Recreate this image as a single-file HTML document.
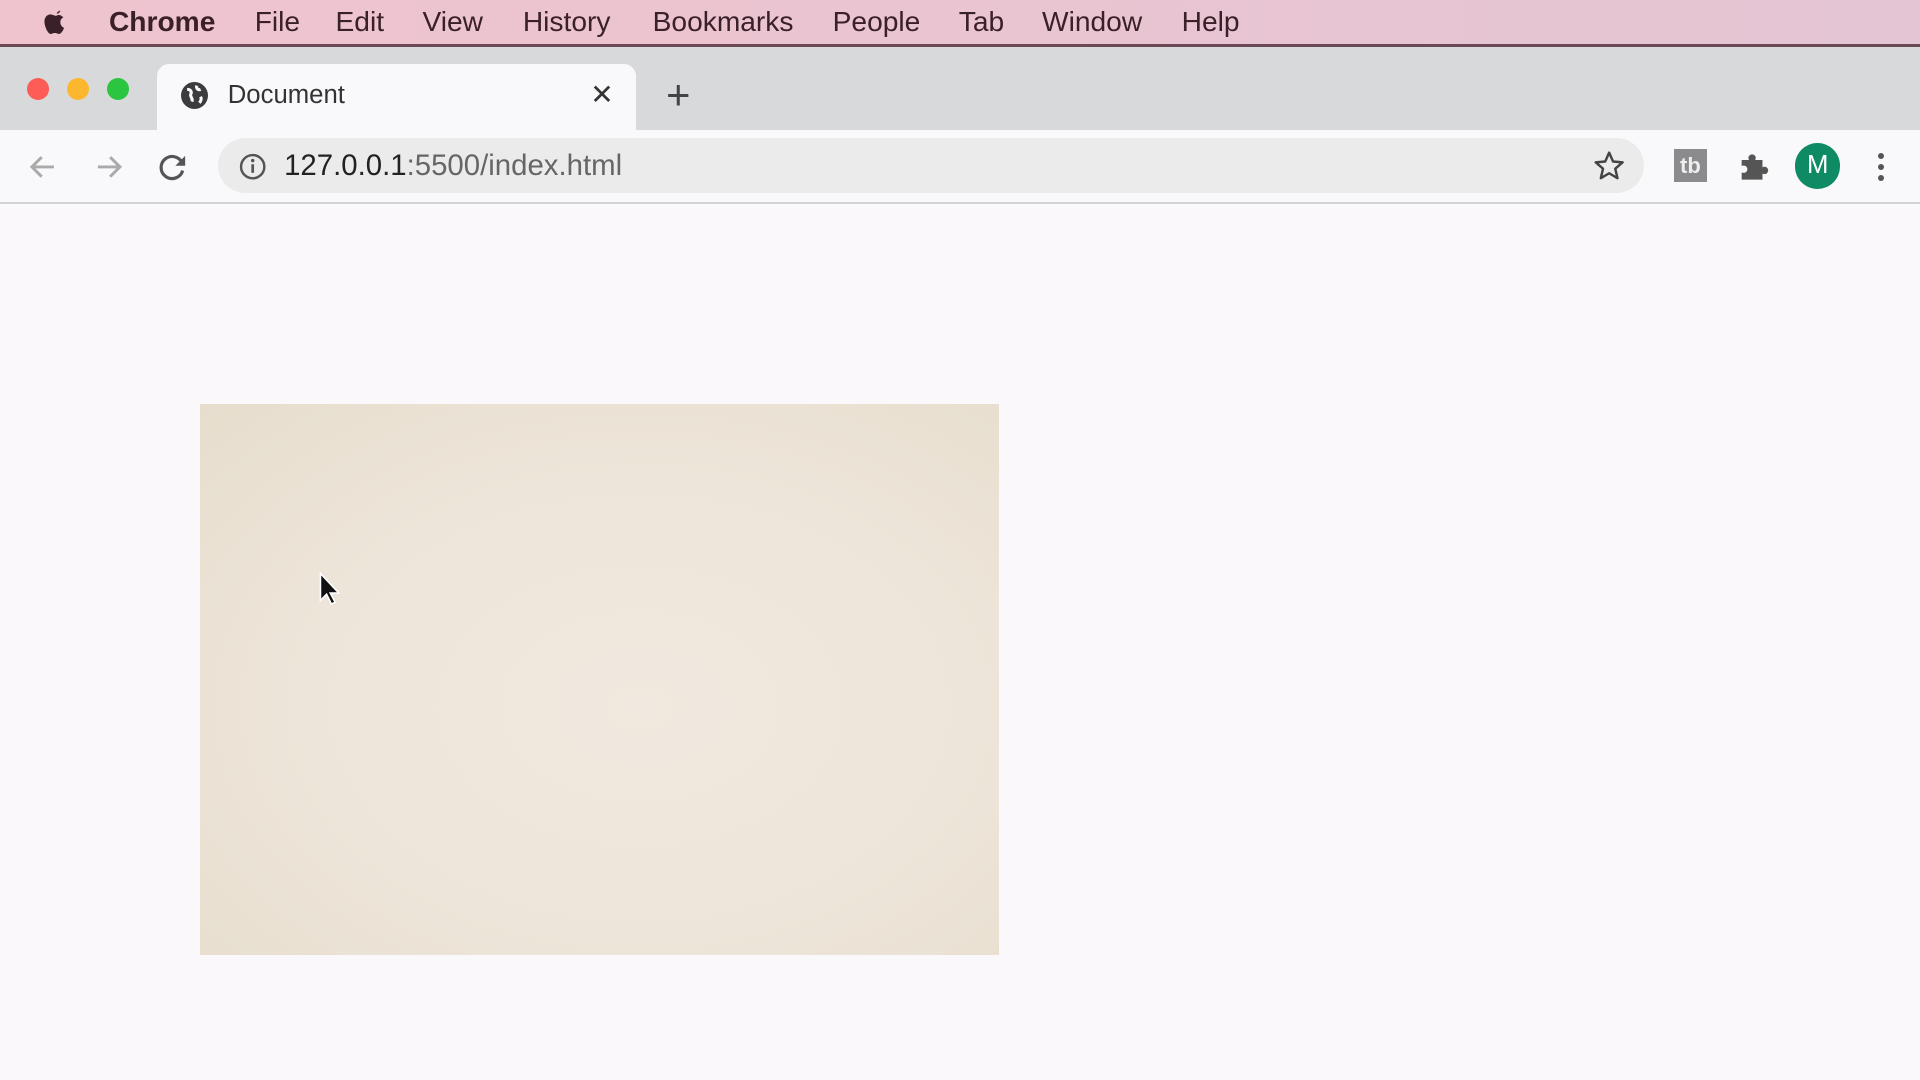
<!DOCTYPE html><html><head><style>
html,body{margin:0;padding:0;overflow:hidden}
body{width:1568px;height:882px;zoom:1.22449;background:#faf8fb;font-family:"Liberation Sans",sans-serif;position:relative}
.a{position:absolute}
</style></head><body>
<div class="a" style="left:0;top:0;width:1568px;height:36px;background:linear-gradient(90deg,#efc4cf,#e4c5d3)"></div>
<div class="a" style="left:0;top:36px;width:1568px;height:2px;background:#6b4a55"></div>
<div class="a" style="left:34px;top:6px;width:22px;height:24px;"><svg width="22" height="24" viewBox="0 0 22 24"><path d="M15 3c-1 0-2.5 1-3 2.5 1.2.1 2.6-.9 3-2.5zM11 7c-1.5 0-2.5-1-4-1-2.5 0-5 2-5 6 0 4 3 10 5 10 1.3 0 1.8-.8 3.5-.8s2 .8 3.5.8c1.6 0 3.2-2.6 4-5-2-.8-3-2.5-3-4.5s1-3.2 2.4-4c-1-1.4-2.4-2-3.8-2-1.5 0-2.1 1-2.6 1z" fill="#3a2028"/></svg></div>
<div class="a" style="top:5px;left:0;font-size:23px;color:#3a2028;white-space:nowrap">
<span class="a" style="left:89px;font-weight:bold">Chrome</span><span class="a" style="left:208px">File</span><span class="a" style="left:274px">Edit</span><span class="a" style="left:345px">View</span><span class="a" style="left:427px">History</span><span class="a" style="left:533px">Bookmarks</span><span class="a" style="left:680px">People</span><span class="a" style="left:783px">Tab</span><span class="a" style="left:851px">Window</span><span class="a" style="left:965px">Help</span></div>
<div class="a" style="left:0;top:38px;width:1568px;height:68px;background:#d8d9db"></div>
<div class="a" style="left:22px;top:64px;width:18px;height:18px;border-radius:50%;background:#fd5d56"></div>
<div class="a" style="left:55px;top:64px;width:18px;height:18px;border-radius:50%;background:#fdb72e"></div>
<div class="a" style="left:87px;top:64px;width:18px;height:18px;border-radius:50%;background:#2bc53f"></div>
<div class="a" style="left:128px;top:52px;width:391px;height:56px;background:#f9f8fa;border-radius:10px 10px 0 0"></div>
<div class="a" style="left:148px;top:67px;width:22px;height:22px;border-radius:50%;background:#3c3c3e"><svg width="22" height="22"><path d="M5 6c3 0 4 2 3 4s2 3 1 6M13 3c-1 2 1 4 3 3M16 12c1 2 0 4-1 5" stroke="#f9f8fa" stroke-width="2.5" fill="none"/></svg></div>
<div class="a" style="left:186px;top:66px;font-size:21px;color:#333">Document</div>
<div class="a" style="left:482px;top:64px;font-size:23px;color:#333">✕</div>
<div class="a" style="left:544px;top:58px;font-size:34px;color:#444;font-weight:300">+</div>
<div class="a" style="left:0;top:106px;width:1568px;height:59px;background:#f9f8fa"></div>
<div class="a" style="left:0;top:165px;width:1568px;height:2px;background:#d3d2d4"></div>
<svg class="a" style="left:22px;top:123px" width="26" height="26"><path d="M22 13H5M12 5l-8 8 8 8" stroke="#aaa" stroke-width="2.4" fill="none"/></svg>
<svg class="a" style="left:76px;top:123px" width="26" height="26"><path d="M4 13h17M14 5l8 8-8 8" stroke="#aaa" stroke-width="2.4" fill="none"/></svg>
<svg class="a" style="left:128px;top:123px" width="26" height="26"><path d="M21 11A9 9 0 1 0 21 16" stroke="#555" stroke-width="2.6" fill="none"/><path d="M23 4v8h-8z" fill="#555"/></svg>
<div class="a" style="left:178px;top:113px;width:1165px;height:45px;border-radius:23px;background:#ecebec"></div>
<svg class="a" style="left:194px;top:124px" width="24" height="24"><circle cx="12" cy="12" r="9.5" stroke="#555" stroke-width="2" fill="none"/><path d="M12 10v7" stroke="#555" stroke-width="2.2"/><circle cx="12" cy="7" r="1.4" fill="#555"/></svg>
<div class="a" style="left:232px;top:122px;font-size:24px;color:#222">127.0.0.1<span style="color:#666">:5500/index.html</span></div>
<svg class="a" style="left:1300px;top:122px" width="28" height="28"><path d="M14 3l3.2 7.2 7.8.7-6 5.2 1.8 7.7L14 19.8 7.2 23.8 9 16.1 3 10.9l7.8-.7z" stroke="#444" stroke-width="2" fill="none" stroke-linejoin="round"/></svg>
<div class="a" style="left:1367px;top:122px;width:27px;height:27px;background:#8b8a8c;color:#eee;font-weight:bold;font-size:18px;text-align:center;line-height:27px">tb</div>
<svg class="a" style="left:1419px;top:122px" width="28" height="28"><path d="M3 9h6a3 3 0 1 1 5 0h6v6a3 3 0 1 1 0 5v5H3v-6a3 3 0 1 0 0-5z" fill="#555"/></svg>
<div class="a" style="left:1466px;top:117px;width:37px;height:37px;border-radius:50%;background:#0e8a64;color:#fff;font-size:21px;text-align:center;line-height:37px">M</div>
<div class="a" style="left:1534px;top:125px;width:5px;height:5px;border-radius:50%;background:#555;box-shadow:0 9px 0 #555,0 18px 0 #555"></div>
<div class="a" style="left:163px;top:330px;width:653px;height:450px;background:radial-gradient(ellipse at 55% 55%,#f0e9df 0%,#ede5d9 55%,#e6ddcd 100%)"></div>
<svg class="a" style="left:260px;top:466px" width="20" height="30"><path d="M2 2v22l5-5 4 8 3-1.5-4-7.5h7z" fill="#111" stroke="#fff" stroke-width="1.3"/></svg>
</body></html>
